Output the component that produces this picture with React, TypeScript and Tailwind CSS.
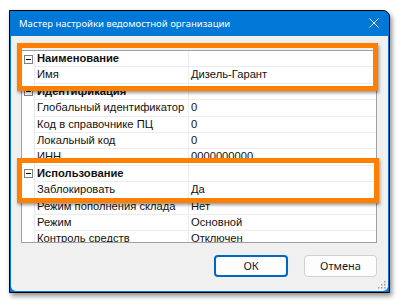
import React from "react";

type Row = { cat?: boolean; name: string; value?: string };

const rows: Row[] = [
  { cat: true, name: "Наименование" },
  { name: "Имя", value: "Дизель-Гарант" },
  { cat: true, name: "Идентификация" },
  { name: "Глобальный идентификатор", value: "0" },
  { name: "Код в справочнике ПЦ", value: "0" },
  { name: "Локальный код", value: "0" },
  { name: "ИНН", value: "0000000000" },
  { cat: true, name: "Использование" },
  { name: "Заблокировать", value: "Да" },
  { name: "Режим пополнения склада", value: "Нет" },
  { name: "Режим", value: "Основной" },
  { name: "Контроль средств", value: "Отключен" },
];

function Minus() {
  return (
    <div className="w-[9px] h-[9px] border border-[#808080] bg-white flex items-center justify-center">
      <div className="w-[5px] h-px bg-black" />
    </div>
  );
}

export default function App() {
  return (
    <div className="relative w-[400px] h-[302px] bg-white overflow-hidden" style={{ fontFamily: "'Noto Sans', sans-serif" }}>
      <div className="ml-[9px] mt-[10px] w-[381px] h-[283px] border border-black bg-[#0078d7] rounded-tr-[7px] shadow-[2px_3px_5px_rgba(0,0,0,0.45)] flex flex-col p-px pt-0">
        <div className="h-[25px] flex items-center justify-between pl-[8px] pr-[9px] text-white text-[9.5px]">
          <span className="leading-none">Мастер настройки ведомостной организации</span>
          <svg width="10" height="10" viewBox="0 0 10 10" className="mt-[-1px]">
            <path d="M0.5 0.5 L9.5 9.5 M9.5 0.5 L0.5 9.5" stroke="white" strokeWidth="1" />
          </svg>
        </div>
        <div className="flex-1 bg-[#f0f0f0] rounded-b-[5px] flex flex-col pl-[10px] pr-[11px] pt-[14px] relative">
          <div className="h-[193px] border border-[#a0a0a0] bg-white overflow-hidden" style={{ fontFamily: "'Liberation Sans', sans-serif" }}>
            {rows.map((r, i) => (
              <div key={i} className="flex h-[16.4px] text-[11.2px] text-[#111] leading-none">
                <div className="w-[13px] shrink-0 flex items-center justify-center bg-white border-r border-[#e8e8e8]">
                  {r.cat ? <Minus /> : null}
                </div>
                <div className={`w-[154px] shrink-0 flex items-center pl-[2px] border-b border-r border-[#ececec] whitespace-nowrap ${r.cat ? "font-bold" : ""}`}>
                  {r.name}
                </div>
                <div className="flex-1 flex items-center pl-[2px] border-b border-[#ececec] whitespace-nowrap">
                  {r.value ?? ""}
                </div>
              </div>
            ))}
          </div>
          <div className="flex justify-end gap-[16px] mt-[12px] text-[11px]">
            <button className="w-[74px] h-[22px] rounded-[4px] border-2 border-[#0067c0] bg-[#fdfdfd] text-[#1a1a1a]">ОК</button>
            <button className="w-[73px] h-[22px] rounded-[4px] border border-[#d0d0d0] bg-[#fdfdfd] text-[#1a1a1a]">Отмена</button>
          </div>
          <svg className="absolute right-[2px] bottom-[2px]" width="8" height="8" viewBox="0 0 8 8">
            <rect x="6" y="0" width="1.5" height="1.5" fill="#a0a0a0" />
            <rect x="3" y="3" width="1.5" height="1.5" fill="#a0a0a0" />
            <rect x="6" y="3" width="1.5" height="1.5" fill="#a0a0a0" />
            <rect x="0" y="6" width="1.5" height="1.5" fill="#a0a0a0" />
            <rect x="3" y="6" width="1.5" height="1.5" fill="#a0a0a0" />
            <rect x="6" y="6" width="1.5" height="1.5" fill="#a0a0a0" />
          </svg>
        </div>
      </div>
      <div className="absolute left-[17px] top-[43px] w-[361px] h-[48px] border-[5px] border-[#ff8000] shadow-[1px_2px_3px_rgba(0,0,0,0.4)]" />
      <div className="absolute left-[17px] top-[158px] w-[362px] h-[45px] border-[5px] border-[#ff8000] shadow-[1px_2px_3px_rgba(0,0,0,0.4)]" />
    </div>
  );
}
